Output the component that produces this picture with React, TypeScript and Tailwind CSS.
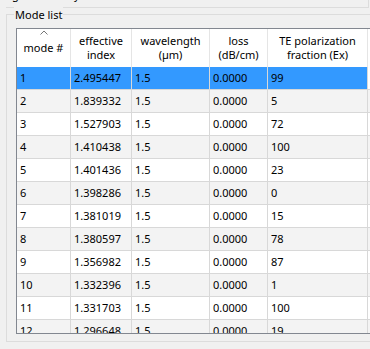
const rows: [string, string, string, string, string][] = [
  ['1', '2.495447', '1.5', '0.0000', '99'],
  ['2', '1.839332', '1.5', '0.0000', '5'],
  ['3', '1.527903', '1.5', '0.0000', '72'],
  ['4', '1.410438', '1.5', '0.0000', '100'],
  ['5', '1.401436', '1.5', '0.0000', '23'],
  ['6', '1.398286', '1.5', '0.0000', '0'],
  ['7', '1.381019', '1.5', '0.0000', '15'],
  ['8', '1.380597', '1.5', '0.0000', '78'],
  ['9', '1.356982', '1.5', '0.0000', '87'],
  ['10', '1.332396', '1.5', '0.0000', '1'],
  ['11', '1.331703', '1.5', '0.0000', '100'],
  ['12', '1.296648', '1.5', '0.0000', '19'],
]

const widths = ['w-[54px]', 'w-[61px]', 'w-[78px]', 'w-[58px]', 'w-[100px]']

const headers = [
  ['mode #'],
  ['effective', 'index'],
  ['wavelength', '(µm)'],
  ['loss', '(dB/cm)'],
  ['TE polarization', 'fraction (Ex)'],
]

export default function App() {
  return (
    <div
      className="relative h-[349px] w-[370px] overflow-hidden bg-[#f0f0f0] text-[11px] text-black"
      style={{ fontFamily: '"Noto Sans", "Open Sans", sans-serif' }}
    >
      {/* tail of the widget above, only descenders peek out */}
      <div className="ml-[6px] mr-[1px] h-[8px] overflow-hidden border-b border-r border-[#dcdcdc]">
        <div className="-mt-[12px] flex leading-[14px]">
          <span className="ml-[6px]">g</span>
          <span className="ml-[37px]">Only</span>
        </div>
      </div>

      {/* Mode list group box */}
      <div className="relative ml-[6px] mt-[6px] w-[400px] border-b border-l border-t border-[#dcdcdc] pb-[7px] pl-[9px] pt-[13px]">
        <span className="absolute -top-[8px] left-[7px] bg-[#f0f0f0] px-px leading-[15px]">Mode list</span>

        <div className="h-[306px] overflow-hidden border border-[#828790] bg-white">
          {/* header */}
          <div className="relative flex h-[38px] bg-white">
            {headers.map((h, i) => (
              <div
                key={i}
                className={`${widths[i]} flex shrink-0 flex-col items-center justify-center border-r border-[#e5e5e5] leading-[14px]`}
              >
                {h.map((t) => (
                  <span key={t}>{t}</span>
                ))}
              </div>
            ))}
            <div className="flex-1" />
            <svg className="absolute left-[23px] top-[1px]" width="8" height="5" viewBox="0 0 8 5">
              <path d="M0.5 4.5 L4 1 L7.5 4.5" fill="none" stroke="#777" strokeWidth="1" />
            </svg>
          </div>

          {/* rows */}
          {rows.map((r, ri) => {
            const selected = ri === 0
            const bg = selected ? 'bg-[#3399ff]' : ri % 2 === 1 ? 'bg-[#f3f3f3]' : 'bg-white'
            return (
              <div key={ri} className={`flex h-[23px] border-b border-[#d8d8d8] ${bg}`}>
                {r.map((c, ci) => (
                  <div
                    key={ci}
                    className={`${widths[ci]} flex shrink-0 items-center border-r border-[#d8d8d8] px-[3px]`}
                  >
                    {c}
                  </div>
                ))}
                <div className={`flex-1 ${selected ? 'bg-white' : ''}`} />
              </div>
            )
          })}
        </div>
      </div>
    </div>
  )
}
